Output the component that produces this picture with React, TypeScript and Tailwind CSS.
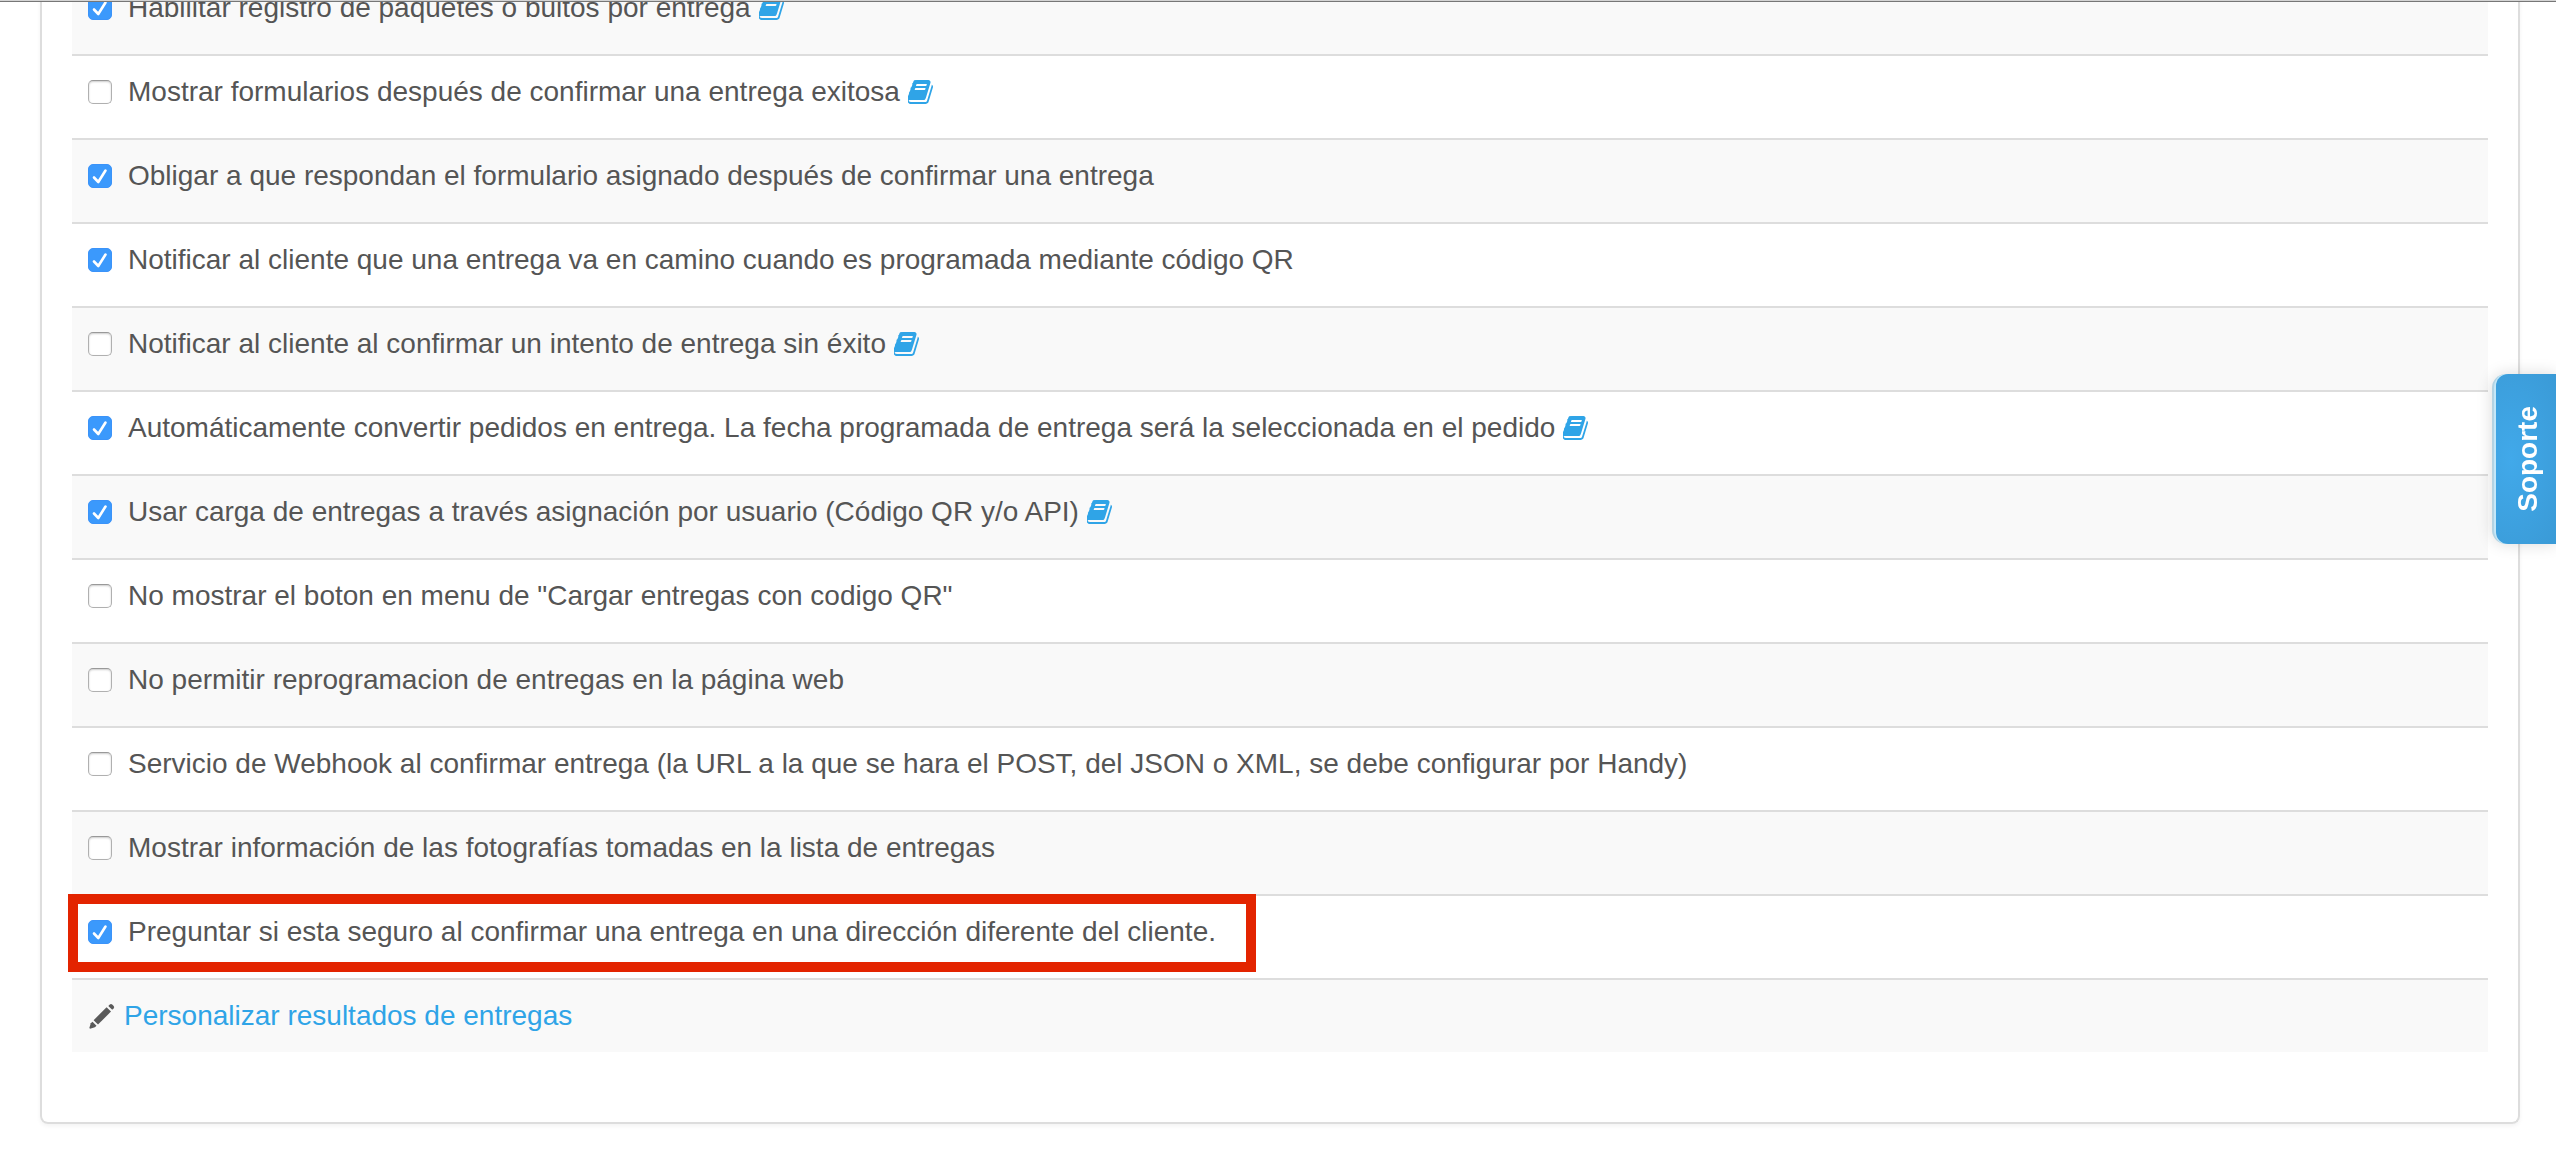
type Option = {
  id: string;
  label: string;
  checked?: boolean;
  help?: boolean;
  highlighted?: boolean;
};

const options: Option[] = [
  { id: "paquetes", label: "Habilitar registro de paquetes o bultos por entrega", checked: true, help: true },
  { id: "formularios", label: "Mostrar formularios después de confirmar una entrega exitosa", help: true },
  { id: "obligar", label: "Obligar a que respondan el formulario asignado después de confirmar una entrega", checked: true },
  { id: "camino", label: "Notificar al cliente que una entrega va en camino cuando es programada mediante código QR", checked: true },
  { id: "intento", label: "Notificar al cliente al confirmar un intento de entrega sin éxito", help: true },
  { id: "convertir", label: "Automáticamente convertir pedidos en entrega. La fecha programada de entrega será la seleccionada en el pedido", checked: true, help: true },
  { id: "carga", label: "Usar carga de entregas a través asignación por usuario (Código QR y/o API)", checked: true, help: true },
  { id: "boton", label: 'No mostrar el boton en menu de "Cargar entregas con codigo QR"' },
  { id: "reprogramacion", label: "No permitir reprogramacion de entregas en la página web" },
  { id: "webhook", label: "Servicio de Webhook al confirmar entrega (la URL a la que se hara el POST, del JSON o XML, se debe configurar por Handy)" },
  { id: "fotografias", label: "Mostrar información de las fotografías tomadas en la lista de entregas" },
  { id: "direccion", label: "Preguntar si esta seguro al confirmar una entrega en una dirección diferente del cliente.", checked: true, highlighted: true },
];

function BookIcon() {
  return (
    <svg viewBox="64 0 1664 1792" className="h-7 w-[26px]" fill="currentColor" aria-hidden="true">
      <path d="M1639 478q40 57 18 129l-275 906q-19 64-76.500 107.500t-122.500 43.500h-923q-77 0-148.500-53.500t-99.500-131.500q-24-67-2-127 0-4 3-27t4-37q1-8-3-21.500t-3-19.500q2-11 8-21t16.500-23.500 16.500-23.500q23-38 45-91.500t30-91.500q3-10 .5-30t-.5-28q3-11 17-28t17-23q21-36 42-92t25-90q1-9-2.500-32t.5-28q4-13 22-30.500t22-22.500q19-26 42.500-84.500t27.500-96.500q1-8-3-25.500t-2-26.500q2-8 9-18t18-23 17-21q8-12 16.500-30.500t15-35 16-36 19.500-32 26.500-23.500 36-11.500 47.500 5.500l-1 3q38-9 51-9h761q74 0 114 56t18 130l-274 906q-36 119-71.500 153.500t-128.500 34.500h-869q-27 0-38 15-11 16-1 43 24 70 144 70h923q29 0 56-15.500t35-41.500l300-987q7-22 5-57 38 15 59 43zm-1064 2q-4 13 2 22.500t20 9.500h608q13 0 25.500-9.500t16.500-22.500l21-64q4-13-2-22.500t-20-9.500h-608q-13 0-25.500 9.500t-16.500 22.500zm-83 256q-4 13 2 22.500t20 9.500h608q13 0 25.500-9.500t16.500-22.500l21-64q4-13-2-22.500t-20-9.500h-608q-13 0-25.500 9.500t-16.500 22.500z" />
    </svg>
  );
}

function PencilIcon() {
  return (
    <svg viewBox="0 0 28 28" className="size-7" fill="#5a5a5a" aria-hidden="true">
      <path d="M20.300 4l1.500-1.600q1.200-1 2.400 0l1.500 1.500q1 1.200 0 2.400L24.200 7.800z" />
      <path d="M18.600 5.200l4.400 4.400L10 22.600l-4.400-4.400z" />
      <path d="M4.500 19.700l4 4-1.600 1.500-4.800 1.500-.8-.8 1.500-4.600z" />
    </svg>
  );
}

function OptionRow({ option }: { option: Option }) {
  return (
    <li className="flex border-t-2 border-[#ddd] px-4 pt-4 pb-[26px] odd:bg-[#f9f9f9]">
      <div className="relative flex items-center gap-2">
        <label htmlFor={option.id} className="flex items-center gap-4">
          <span className="grid size-6 shrink-0 place-items-center">
            <input
              id={option.id}
              type="checkbox"
              defaultChecked={option.checked}
              className="peer col-start-1 row-start-1 size-6 appearance-none rounded-[5px] border border-[#b0b0b0] border-t-[#999] bg-white shadow-[inset_0_1px_2px_#ccc] checked:border-[#3b93f9] checked:bg-[#3b99fc] checked:shadow-none"
            />
            <svg
              viewBox="0 0 24 24"
              className="pointer-events-none col-start-1 row-start-1 hidden size-6 peer-checked:block"
              fill="none"
              stroke="white"
              strokeWidth="2.600"
              strokeLinecap="round"
              strokeLinejoin="round"
              aria-hidden="true"
            >
              <path d="M6 13.500l4.300 4.500 7.200-11.500" />
            </svg>
          </span>
          <span>{option.label}</span>
        </label>
        {option.help && (
          <a href="#ayuda" aria-label="Ayuda" className="text-[#2fa4e7]">
            <BookIcon />
          </a>
        )}
        {option.highlighted && (
          <span className="pointer-events-none absolute -top-[18px] -right-10 -bottom-5 -left-5 border-[10px] border-[#e32400]" />
        )}
      </div>
    </li>
  );
}

export default function App() {
  return (
    <div className="min-h-screen overflow-hidden bg-white font-['Liberation_Sans',Arial,sans-serif] text-[28px] leading-10 text-[#555]">
      <div className="relative z-10 h-[2px] border-b border-[#777] bg-[#d4d4d4]" />
      <main className="-mt-8 mr-9 ml-10 rounded-b-lg border-x-2 border-b-2 border-[#ddd] px-[30px] pb-[70px] shadow-[0_2px_4px_rgba(0,0,0,0.05)]">
        <ul>
          {options.map((option) => (
            <OptionRow key={option.id} option={option} />
          ))}
          <li className="flex border-t-2 border-[#ddd] p-4 odd:bg-[#f9f9f9]">
            <a href="#resultados" className="flex items-center gap-2 text-[#2fa4e7]">
              <PencilIcon />
              <span>Personalizar resultados de entregas</span>
            </a>
          </li>
        </ul>
      </main>
      <div className="fixed top-[374px] right-0 rounded-l-[14px] border-l-2 border-[#b3d3e3] bg-[#c5e7f8] pl-[2px] shadow-[0_0_16px_rgba(0,0,0,0.15)]">
        <button
          type="button"
          className="flex h-[170px] w-15 items-center justify-center rounded-l-xl bg-radial-[at_25%_50%] from-[#41a9ea] to-[#3a9ad6] pl-1 font-bold text-white"
        >
          <span className="rotate-180 [writing-mode:vertical-rl]">Soporte</span>
        </button>
      </div>
    </div>
  );
}
